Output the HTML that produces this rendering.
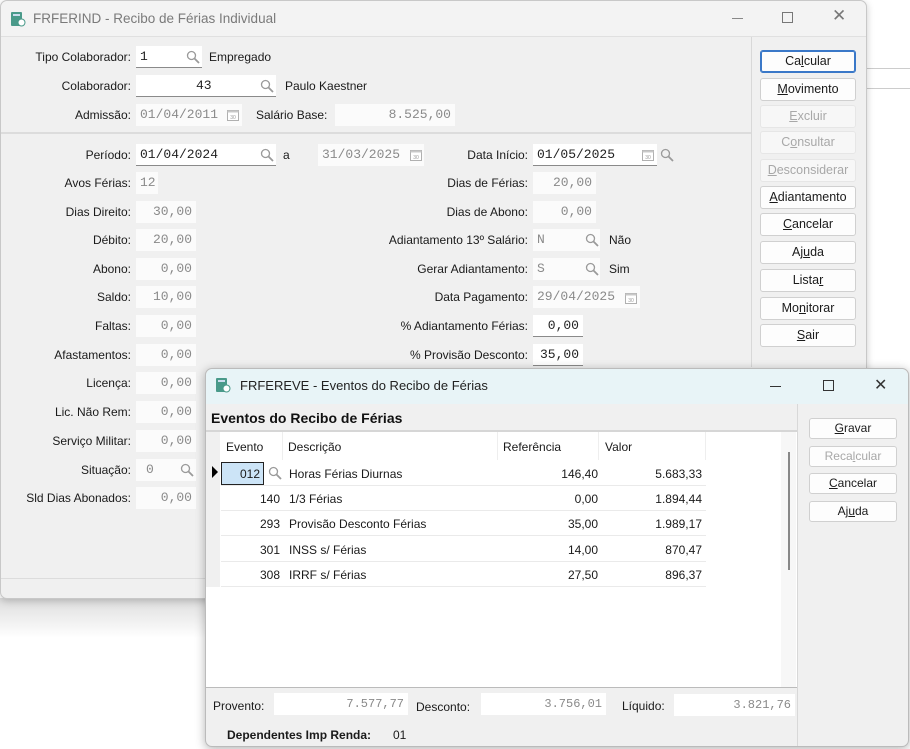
<!DOCTYPE html>
<html><head><meta charset="utf-8"><style>
*{box-sizing:border-box;margin:0;padding:0}
body{width:910px;height:749px;overflow:hidden;background:#fff;font-family:"Liberation Sans",sans-serif;font-size:12px;color:#1a1a1a;position:relative}
.a{position:absolute}
.lbl{position:absolute;text-align:right;white-space:nowrap;line-height:16px}
.f{position:absolute;height:22px;background:#fbfbfb;font-family:"Liberation Mono",monospace;font-size:13px;color:#8a8a8a;line-height:22px;padding:0 4px;white-space:nowrap}
.e{background:#fff;color:#222;border-bottom:1px solid #8a8a8a}
.r{text-align:right}
.mg{position:absolute;width:14px;height:14px}
.btn{position:absolute;left:760px;width:96px;height:23px;background:#fdfdfd;border:1px solid #d0d0d0;border-radius:3px;text-align:center;line-height:21px;font-size:12.5px;color:#1a1a1a}
.dis{color:#a8a8a8;background:#f7f7f7;border-color:#e6e6e6}
.b2{position:absolute;left:809px;width:88px;height:21px;background:#fdfdfd;border:1px solid #d0d0d0;border-radius:3px;text-align:center;line-height:19px;font-size:12px}
.cell{position:absolute;font-size:12px;line-height:16px;white-space:nowrap}
</style></head><body>
<svg width="0" height="0" style="position:absolute"><defs><symbol id="m" viewBox="0 0 14 14"><circle cx="5.5" cy="5.5" r="4" fill="none" stroke="#9a9a9a" stroke-width="1.3"/><line x1="8.5" y1="8.5" x2="13" y2="13" stroke="#9a9a9a" stroke-width="1.8"/></symbol>
<symbol id="c" viewBox="0 0 12 12"><rect x="0.5" y="1.5" width="11" height="10" fill="#fff" stroke="#b0b0b0"/><rect x="0.5" y="1.5" width="11" height="2" fill="#c8c8c8"/><text x="6" y="10" font-size="5" text-anchor="middle" fill="#999" font-family="Liberation Sans">30</text></symbol>
<symbol id="ic" viewBox="0 0 16 16"><rect x="1" y="1" width="11" height="14" rx="1" fill="#4a9a8a"/><rect x="3" y="3" width="7" height="2" fill="#cde"/><circle cx="11.5" cy="11.5" r="3.5" fill="#fff" stroke="#4a9a8a"/></symbol></defs></svg>

<!-- background right area -->
<div class="a" style="left:866px;top:68px;width:44px;height:1px;background:#ccc"></div>
<div class="a" style="left:866px;top:88px;width:44px;height:1px;background:#ccc"></div>
<div class="a" style="left:0;top:598px;width:206px;height:40px;background:linear-gradient(#ddd,#fff)"></div>

<!-- main window -->
<div class="a" style="left:0;top:0;width:867px;height:599px;background:#f0f0f0;border:1px solid #c8c8c8;border-radius:7px;box-shadow:0 2px 8px rgba(0,0,0,.2)"></div>
<div class="a" style="left:1px;top:1px;width:865px;height:36px;background:#f3f3f3;border-radius:7px 7px 0 0;border-bottom:1px solid #e0e0e0"></div>
<svg class="a" style="left:10px;top:11px" width="16" height="16"><use href="#ic"/></svg>
<div class="a" style="left:33px;top:11px;font-size:13.5px;color:#7a7a7a">FRFERIND - Recibo de Férias Individual</div>
<div class="a" style="left:732px;top:18px;width:11px;height:1px;background:#888"></div>
<div class="a" style="left:782px;top:12px;width:11px;height:11px;border:1px solid #777"></div>
<div class="a" style="left:832px;top:6px;font-size:17px;color:#777">✕</div>
<div class="a" style="left:751px;top:37px;width:1px;height:330px;background:#d8d8d8"></div>
<div class="a" style="left:1px;top:132px;width:750px;height:2px;background:#dcdcdc"></div>
<div class="a" style="left:1px;top:578px;width:865px;height:1px;background:#dcdcdc"></div>

<div class="lbl" style="left:0;width:131px;top:49px">Tipo Colaborador:</div>
<div class="f e" style="left:136px;top:46px;width:66px">1</div><svg class="mg" style="left:186px;top:50px"><use href="#m"/></svg>
<div class="lbl" style="left:209px;top:49px">Empregado</div>
<div class="lbl" style="left:0;width:131px;top:78px">Colaborador:</div>
<div class="f e" style="left:136px;top:75px;width:140px;padding-left:60px">43</div><svg class="mg" style="left:260px;top:79px"><use href="#m"/></svg>
<div class="lbl" style="left:285px;top:78px">Paulo Kaestner</div>
<div class="lbl" style="left:0;width:131px;top:107px">Admissão:</div>
<div class="f" style="left:136px;top:104px;width:106px">01/04/2011</div><svg class="a" style="left:227px;top:109px" width="12" height="12"><use href="#c"/></svg>
<div class="lbl" style="left:256px;top:107px">Salário Base:</div>
<div class="f r" style="left:335px;top:104px;width:120px">8.525,00</div>

<div class="lbl" style="left:0;width:131px;top:147px">Período:</div>
<div class="f e" style="left:136px;top:144px;width:140px">01/04/2024</div><svg class="mg" style="left:260px;top:148px"><use href="#m"/></svg>
<div class="lbl" style="left:283px;top:147px">a</div>
<div class="f" style="left:318px;top:144px;width:106px">31/03/2025</div><svg class="a" style="left:410px;top:149px" width="12" height="12"><use href="#c"/></svg>
<div class="lbl" style="left:300px;width:228px;top:147px">Data Início:</div>
<div class="f e" style="left:533px;top:144px;width:124px">01/05/2025</div><svg class="a" style="left:642px;top:149px" width="12" height="12"><use href="#c"/></svg><svg class="mg" style="left:660px;top:148px"><use href="#m"/></svg>

<div class="lbl" style="left:0;width:131px;top:175px">Avos Férias:</div><div class="f" style="left:136px;top:172px;width:22px">12</div>
<div class="lbl" style="left:0;width:131px;top:204px">Dias Direito:</div><div class="f r" style="left:136px;top:201px;width:60px">30,00</div>
<div class="lbl" style="left:0;width:131px;top:232px">Débito:</div><div class="f r" style="left:136px;top:229px;width:60px">20,00</div>
<div class="lbl" style="left:0;width:131px;top:261px">Abono:</div><div class="f r" style="left:136px;top:258px;width:60px">0,00</div>
<div class="lbl" style="left:0;width:131px;top:289px">Saldo:</div><div class="f r" style="left:136px;top:286px;width:60px">10,00</div>
<div class="lbl" style="left:0;width:131px;top:318px">Faltas:</div><div class="f r" style="left:136px;top:315px;width:60px">0,00</div>
<div class="lbl" style="left:0;width:131px;top:347px">Afastamentos:</div><div class="f r" style="left:136px;top:344px;width:60px">0,00</div>
<div class="lbl" style="left:0;width:131px;top:375px">Licença:</div><div class="f r" style="left:136px;top:372px;width:60px">0,00</div>
<div class="lbl" style="left:0;width:131px;top:404px">Lic. Não Rem:</div><div class="f r" style="left:136px;top:401px;width:60px">0,00</div>
<div class="lbl" style="left:0;width:131px;top:433px">Serviço Militar:</div><div class="f r" style="left:136px;top:430px;width:60px">0,00</div>
<div class="lbl" style="left:0;width:131px;top:462px">Situação:</div><div class="f" style="left:136px;top:459px;width:60px;padding-left:10px">0</div><svg class="mg" style="left:180px;top:463px"><use href="#m"/></svg>
<div class="lbl" style="left:0;width:131px;top:490px">Sld Dias Abonados:</div><div class="f r" style="left:136px;top:487px;width:60px">0,00</div>

<div class="lbl" style="left:300px;width:228px;top:175px">Dias de Férias:</div><div class="f r" style="left:533px;top:172px;width:63px">20,00</div>
<div class="lbl" style="left:300px;width:228px;top:204px">Dias de Abono:</div><div class="f r" style="left:533px;top:201px;width:63px">0,00</div>
<div class="lbl" style="left:300px;width:228px;top:232px">Adiantamento 13º Salário:</div><div class="f" style="left:533px;top:229px;width:67px">N</div><svg class="mg" style="left:585px;top:233px"><use href="#m"/></svg><div class="lbl" style="left:609px;top:232px">Não</div>
<div class="lbl" style="left:300px;width:228px;top:261px">Gerar Adiantamento:</div><div class="f" style="left:533px;top:258px;width:67px">S</div><svg class="mg" style="left:585px;top:262px"><use href="#m"/></svg><div class="lbl" style="left:609px;top:261px">Sim</div>
<div class="lbl" style="left:300px;width:228px;top:289px">Data Pagamento:</div><div class="f" style="left:533px;top:286px;width:107px">29/04/2025</div><svg class="a" style="left:625px;top:292px" width="12" height="12"><use href="#c"/></svg>
<div class="lbl" style="left:300px;width:228px;top:318px">% Adiantamento Férias:</div><div class="f e r" style="left:533px;top:315px;width:50px">0,00</div>
<div class="lbl" style="left:300px;width:228px;top:347px">% Provisão Desconto:</div><div class="f e r" style="left:533px;top:344px;width:50px">35,00</div>

<div class="btn" style="top:50px;border-color:#3a78c8;border-width:1px;box-shadow:inset 0 0 0 1px #3a78c8">Ca<u>l</u>cular</div>
<div class="btn" style="top:78px"><u>M</u>ovimento</div>
<div class="btn dis" style="top:105px"><u>E</u>xcluir</div>
<div class="btn dis" style="top:131px">C<u>o</u>nsultar</div>
<div class="btn dis" style="top:159px"><u>D</u>esconsiderar</div>
<div class="btn" style="top:186px"><u>A</u>diantamento</div>
<div class="btn" style="top:213px"><u>C</u>ancelar</div>
<div class="btn" style="top:241px">Aj<u>u</u>da</div>
<div class="btn" style="top:269px">Lista<u>r</u></div>
<div class="btn" style="top:297px">Mo<u>n</u>itorar</div>
<div class="btn" style="top:324px"><u>S</u>air</div>

<!-- second window -->
<div class="a" style="left:205px;top:368px;width:704px;height:379px;background:#f0f0f0;border:1px solid #bbb;border-radius:7px;box-shadow:0 2px 10px rgba(0,0,0,.3)"></div>
<div class="a" style="left:206px;top:369px;width:702px;height:35px;background:#e8f4f7;border-radius:7px 7px 0 0"></div>
<svg class="a" style="left:215px;top:377px" width="16" height="16"><use href="#ic"/></svg>
<div class="a" style="left:240px;top:378px;font-size:13px;color:#222">FRFEREVE - Eventos do Recibo de Férias</div>
<div class="a" style="left:770px;top:386px;width:11px;height:1px;background:#333"></div>
<div class="a" style="left:823px;top:380px;width:11px;height:11px;border:1px solid #333"></div>
<div class="a" style="left:874px;top:375px;font-size:16px;color:#333">✕</div>
<div class="a" style="left:797px;top:404px;width:1px;height:342px;background:#d8d8d8"></div>
<div class="a" style="left:211px;top:410px;font-size:14px;font-weight:bold;color:#111">Eventos do Recibo de Férias</div>
<div class="a" style="left:206px;top:430px;width:591px;height:258px;background:#fff;border-top:2px solid #d6d6d6;border-bottom:1px solid #bbb"></div>
<div class="a" style="left:206px;top:432px;width:14px;height:155px;background:#f0f0f0"></div>
<div class="a" style="left:781px;top:432px;width:15px;height:255px;background:#f7f7f7"></div>
<div class="a" style="left:788px;top:452px;width:2px;height:118px;background:#888"></div>
<div class="cell" style="left:226px;top:439px">Evento</div>
<div class="cell" style="left:288px;top:439px">Descrição</div>
<div class="cell" style="left:503px;top:439px">Referência</div>
<div class="cell" style="left:605px;top:439px">Valor</div>
<div class="a" style="left:282px;top:432px;width:1px;height:28px;background:#eee"></div>
<div class="a" style="left:497px;top:432px;width:1px;height:28px;background:#eee"></div>
<div class="a" style="left:598px;top:432px;width:1px;height:28px;background:#eee"></div>
<div class="a" style="left:705px;top:432px;width:1px;height:28px;background:#eee"></div>
<div class="a" style="left:212px;top:466px;width:0;height:0;border-left:6px solid #000;border-top:6px solid transparent;border-bottom:6px solid transparent"></div>
<div class="a" style="left:221px;top:462px;width:43px;height:23px;background:#cce4f7;border:1px solid #222"></div>
<svg class="mg" style="left:268px;top:466px"><use href="#m"/></svg>
<div class="a" style="left:221px;top:485px;width:485px;height:1px;background:#eaeaea"></div>
<div class="a" style="left:221px;top:510px;width:485px;height:1px;background:#eaeaea"></div>
<div class="a" style="left:221px;top:535px;width:485px;height:1px;background:#eaeaea"></div>
<div class="a" style="left:221px;top:561px;width:485px;height:1px;background:#eaeaea"></div>
<div class="a" style="left:221px;top:586px;width:485px;height:1px;background:#eaeaea"></div>

<div class="cell" style="left:230px;width:30px;text-align:right;top:466px">012</div><div class="cell" style="left:289px;top:466px">Horas Férias Diurnas</div><div class="cell" style="left:500px;width:98px;text-align:right;top:466px">146,40</div><div class="cell" style="left:600px;width:102px;text-align:right;top:466px">5.683,33</div>
<div class="cell" style="left:230px;width:50px;text-align:right;top:491px">140</div><div class="cell" style="left:289px;top:491px">1/3 Férias</div><div class="cell" style="left:500px;width:98px;text-align:right;top:491px">0,00</div><div class="cell" style="left:600px;width:102px;text-align:right;top:491px">1.894,44</div>
<div class="cell" style="left:230px;width:50px;text-align:right;top:516px">293</div><div class="cell" style="left:289px;top:516px">Provisão Desconto Férias</div><div class="cell" style="left:500px;width:98px;text-align:right;top:516px">35,00</div><div class="cell" style="left:600px;width:102px;text-align:right;top:516px">1.989,17</div>
<div class="cell" style="left:230px;width:50px;text-align:right;top:542px">301</div><div class="cell" style="left:289px;top:542px">INSS s/ Férias</div><div class="cell" style="left:500px;width:98px;text-align:right;top:542px">14,00</div><div class="cell" style="left:600px;width:102px;text-align:right;top:542px">870,47</div>
<div class="cell" style="left:230px;width:50px;text-align:right;top:567px">308</div><div class="cell" style="left:289px;top:567px">IRRF s/ Férias</div><div class="cell" style="left:500px;width:98px;text-align:right;top:567px">27,50</div><div class="cell" style="left:600px;width:102px;text-align:right;top:567px">896,37</div>

<div class="b2" style="top:418px"><u>G</u>ravar</div>
<div class="b2 dis" style="top:446px">Reca<u>l</u>cular</div>
<div class="b2" style="top:473px"><u>C</u>ancelar</div>
<div class="b2" style="top:501px">Aj<u>u</u>da</div>

<div class="cell" style="left:213px;top:698px">Provento:</div>
<div class="f r" style="left:274px;top:693px;width:134px;background:#fff;font-size:12px">7.577,77</div>
<div class="cell" style="left:416px;top:699px">Desconto:</div>
<div class="f r" style="left:481px;top:693px;width:125px;background:#fff;font-size:12px">3.756,01</div>
<div class="cell" style="left:622px;top:698px">Líquido:</div>
<div class="f r" style="left:674px;top:694px;width:121px;background:#fff;font-size:12px">3.821,76</div>
<div class="cell" style="left:227px;top:727px;font-weight:bold">Dependentes Imp Renda:</div>
<div class="cell" style="left:393px;top:727px">01</div>
</body></html>
